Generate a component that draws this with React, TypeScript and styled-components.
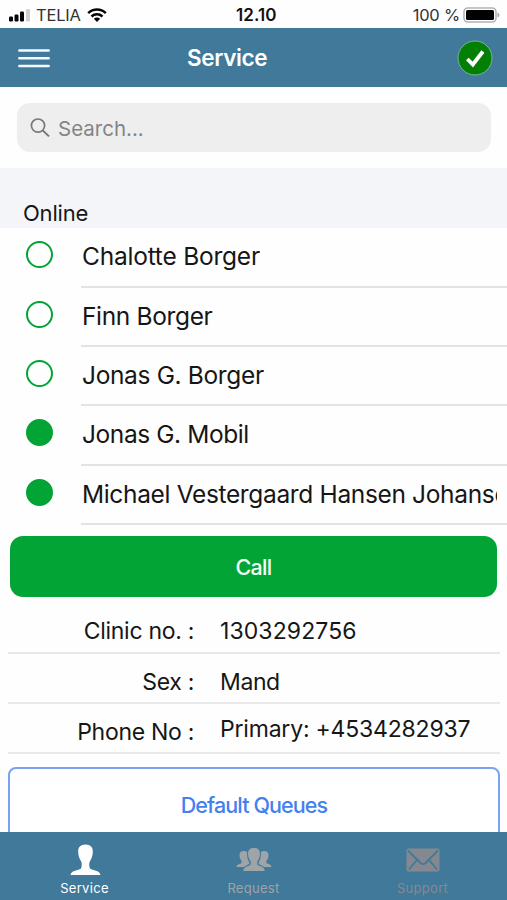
import React from 'react';
import styled, { createGlobalStyle } from 'styled-components';

const Global = createGlobalStyle`
  * { box-sizing: border-box; }
  body { margin: 0; background: #fff; }
`;

const blue = '#41799a';
const green = '#02a436';

const Screen = styled.div`
  width: 507px;
  height: 900px;
  overflow: hidden;
  display: flex;
  flex-direction: column;
  font-family: Inter, sans-serif;
  color: #161616;
  background: #fefefe;
`;

const Label = styled.span<{ $size: number; $spacing?: number; $weight?: number }>`
  display: block;
  white-space: nowrap;
  line-height: 30px;
  font-size: ${(p) => p.$size}px;
  letter-spacing: ${(p) => p.$spacing ?? 0}px;
  font-weight: ${(p) => p.$weight ?? 400};
`;

const StatusBar = styled.div`
  height: 28px;
  flex: none;
  display: grid;
  grid-template-columns: 228px auto 1fr;
  align-items: center;
  padding: 0 7px 0 8px;
  color: #333;
`;
const StatusSide = styled.div<{ $end?: boolean }>`
  display: flex;
  align-items: center;
  justify-content: ${(p) => (p.$end ? 'flex-end' : 'flex-start')};
  gap: ${(p) => (p.$end ? 3 : 6)}px;
`;
const Clock = styled(Label)` color: #111; `;

const NavBar = styled.header`
  height: 59px;
  flex: none;
  display: grid;
  grid-template-columns: 169px auto 1fr;
  align-items: center;
  padding: 0 14px 0 18px;
  background: ${blue};
  color: #fff;
`;
const NavEnd = styled.div`
  display: flex;
  justify-content: flex-end;
`;

const SearchArea = styled.div`
  height: 81px;
  flex: none;
  padding: 16px 16px 0 17px;
`;
const SearchField = styled.div`
  height: 49px;
  border-radius: 13px;
  background: #eee;
  color: #858585;
  display: flex;
  align-items: center;
  gap: 8px;
  padding: 1px 0 0 13px;
`;
const SearchText = styled(Label)` padding-top: 1px; `;

const SectionHeader = styled.div`
  height: 60px;
  flex: none;
  background: #f3f5f9;
  padding: 30px 0 0 23px;
`;

const Contact = styled.div<{ $height: number }>`
  height: ${(p) => p.$height}px;
  flex: none;
  display: flex;
  padding-left: 26px;
`;
const Presence = styled.div<{ $filled?: boolean }>`
  width: 27px;
  height: 27px;
  margin-top: 13px;
  border-radius: 50%;
  border: 2px solid ${green};
  background: ${(p) => (p.$filled ? green : 'transparent')};
`;
const ContactName = styled.div`
  flex: 1;
  min-width: 0;
  margin-left: 28px;
  padding: 13px 0 0 1px;
  border-bottom: 2px solid #e3e3e3;
`;
const Clip = styled.div`
  width: 415px;
  overflow: hidden;
`;

const CallButton = styled.button`
  height: 61px;
  flex: none;
  margin: 11px 10px 0 10px;
  border: 0;
  border-radius: 13px;
  background: ${green};
  color: #f4fff6;
  font-family: inherit;
  display: flex;
  align-items: center;
  justify-content: center;
`;

const Details = styled.div`
  margin: 6px 7px 0 8px;
  flex: none;
`;
const DetailRow = styled.div<{ $height: number }>`
  height: ${(p) => p.$height}px;
  display: grid;
  grid-template-columns: 186px 1fr;
  column-gap: 26px;
  padding-top: 13px;
  border-bottom: 2px solid #e9e9e9;
`;
const Key = styled.div`
  display: flex;
  justify-content: flex-end;
`;
const Value = styled.div<{ $raised?: boolean }>`
  margin-top: ${(p) => (p.$raised ? -3 : 0)}px;
`;

const QueueButton = styled.button`
  height: 75px;
  flex: none;
  margin: 13px 7px -10px 8px;
  border: 2px solid #79a2f0;
  border-radius: 8px;
  background: #fff;
  color: #4480f0;
  font-family: inherit;
  display: flex;
  align-items: center;
  justify-content: center;
`;

const TabBar = styled.nav`
  height: 68px;
  flex: none;
  position: relative;
  display: grid;
  grid-template-columns: repeat(3, 1fr);
  background: ${blue};
`;
const Tab = styled.div<{ $color: string }>`
  display: flex;
  flex-direction: column;
  align-items: center;
  color: ${(p) => p.$color};
  padding-top: 10px;
`;
const TabIcon = styled.div`
  height: 35px;
  display: flex;
  align-items: center;
`;
const TabLabel = styled(Label)` line-height: 22px; `;

const SignalIcon = () => (
  <svg width="22" height="14" viewBox="0 0 22 14">
    <rect x="1" y="8.5" width="4" height="5" rx="1.2" fill="#050505" />
    <rect x="6.5" y="6.5" width="4" height="7" rx="1.2" fill="#050505" />
    <rect x="12" y="3.5" width="4" height="10" rx="1.2" fill="#050505" />
    <rect x="18" y="1" width="4" height="12.5" rx="1.2" fill="#d0d0d0" />
  </svg>
);

const WifiIcon = () => (
  <svg width="20" height="14" viewBox="0 0 20 14" fill="none" stroke="#050505" strokeWidth="2.5">
    <path d="M1.2 5.1C6.2.4 13.8.4 18.8 5.1" />
    <path d="M4.5 8.5c3.2-2.9 7.8-2.9 11 0" />
    <path d="M6.8 10.7 10 14l3.2-3.3c-1.8-1.5-4.6-1.5-6.4 0Z" fill="#050505" stroke="none" />
  </svg>
);

const BatteryIcon = () => (
  <svg width="37" height="16" viewBox="0 0 37 16">
    <rect x="1" y="1" width="32" height="14" rx="4" fill="#fff" stroke="#b2b2b2" strokeWidth="1.6" />
    <rect x="3" y="3" width="28" height="10" rx="1.5" fill="#020202" />
    <path d="M34.5 5.5q2 .6 2 2.5t-2 2.5z" fill="#aaa" />
  </svg>
);

const MenuIcon = () => (
  <svg width="32" height="20" viewBox="0 0 32 20" stroke="#f2faff" strokeWidth="2.4" strokeLinecap="round">
    <path d="M1.3 2.5h29.4M1.3 10.2h29.4M1.3 18h29.4" />
  </svg>
);

const CheckIcon = () => (
  <svg width="36" height="36" viewBox="0 0 36 36">
    <circle cx="18" cy="18" r="17" fill="#038003" stroke="#78b595" strokeWidth="1" />
    <path d="m10.4 19 5.4 5.5L25.9 11.5" fill="none" stroke="#fff" strokeWidth="3.8" />
  </svg>
);

const SearchIcon = () => (
  <svg width="20" height="20" viewBox="0 0 20 20" fill="none" stroke="#777" strokeWidth="1.7">
    <circle cx="8" cy="7.6" r="6.6" />
    <path d="m12.7 12.4 6.3 6" strokeWidth="2" />
  </svg>
);

const PersonIcon = () => (
  <svg width="32" height="32" viewBox="1 0 32 32" fill="currentColor">
    <path d="M17.500 .5c5 0 7.6 2.8 7.3 7.5-.1 4-1.3 7.2-3 9.400-.8 1.500-.8 5.700.4 7.300 2.200 1.800 9.700 1.300 10.300 6.300H2.500c.6-5 8.100-4.500 10.300-6.300 1.200-1.600 1.200-5.800.4-7.300-1.700-2.200-2.900-5.400-3-9.400C9.900 3.300 12.500 .5 17.500 .5Z" />
  </svg>
);

const sideFigure =
  'M7.7 4c1.7 0 2.8.5 3.4 1.4v3.2c.2 2.5.9 4.6 2.1 6.3.2 1.1.2 1.8-.2 2.3-1.4.9-3.5 1.3-4.9 2.8H.5c.2-3.2 3.9-2.7 4.9-4 .4-.7.3-1.900-.1-2.700C4.200 12 3.500 10.500 3.500 8.400 3.300 5.500 5 4 7.700 4Z';

const GroupIcon = () => (
  <svg width="36" height="25" viewBox="0 0 36 25" fill="currentColor">
    <path d="M18 1c4.3 0 6.2 2.3 5.9 6.2-.1 3-1 5-2.4 6.8-.5 1.2-.4 3.2.3 4.1 1.8 1.5 6.5 1.1 6.900 5.900H7.300c.4-4.800 5.100-4.400 6.900-5.900.7-.9.8-2.900.3-4.100-1.400-1.800-2.300-3.800-2.400-6.800C11.800 3.300 13.700 1 18 1Z" />
    <path d={sideFigure} />
    <path transform="matrix(-1 0 0 1 36 0)" d={sideFigure} />
  </svg>
);

const MailIcon = () => (
  <svg width="34" height="24" viewBox="0 0 34 24">
    <rect x=".5" y=".5" width="33" height="23" rx="2" fill="currentColor" />
    <path d="M2 2.5 14.5 15q2.5 2.3 5 0L32 2.5M3 21.5l7.7-9.3M31 21.5l-7.7-9.3" fill="none" stroke={blue} strokeWidth="1.8" />
  </svg>
);

const contacts = [
  { name: 'Chalotte Borger', height: 60, spacing: -0.22 },
  { name: 'Finn Borger', height: 59, spacing: -0.35 },
  { name: 'Jonas G. Borger', height: 59, spacing: -0.35 },
  { name: 'Jonas G. Mobil', height: 60, spacing: -0.42, filled: true },
  { name: 'Michael Vestergaard Hansen Johansen', height: 59, spacing: -0.345, filled: true },
];

const details = [
  { label: 'Clinic no. :', value: '1303292756', height: 51, spacing: 0.1 },
  { label: 'Sex :', value: 'Mand', height: 50, spacing: -0.4 },
  { label: 'Phone No :', value: 'Primary: +4534282937', height: 50, spacing: -0.2, raised: true },
];

export default function App() {
  return (
    <Screen>
      <Global />
      <StatusBar>
        <StatusSide>
          <SignalIcon />
          <Label $size={16.5} $spacing={-0.2}>TELIA</Label>
          <WifiIcon />
        </StatusSide>
        <Clock $size={17} $weight={600} $spacing={0.1}>12.10</Clock>
        <StatusSide $end>
          <Label $size={16.5} $spacing={-0.2}>100 %</Label>
          <BatteryIcon />
        </StatusSide>
      </StatusBar>
      <NavBar>
        <MenuIcon />
        <Label $size={22.5} $weight={600} $spacing={-0.35}>Service</Label>
        <NavEnd><CheckIcon /></NavEnd>
      </NavBar>
      <SearchArea>
        <SearchField>
          <SearchIcon />
          <SearchText $size={20.5}>Search...</SearchText>
        </SearchField>
      </SearchArea>
      <SectionHeader>
        <Label $size={22} $spacing={-0.2}>Online</Label>
      </SectionHeader>
      {contacts.map((c) => (
        <Contact key={c.name} $height={c.height}>
          <Presence $filled={c.filled} />
          <ContactName>
            <Clip><Label $size={24.5} $spacing={c.spacing}>{c.name}</Label></Clip>
          </ContactName>
        </Contact>
      ))}
      <CallButton><Label $size={21.5} $weight={500} $spacing={-0.7}>Call</Label></CallButton>
      <Details>
        {details.map((d) => (
          <DetailRow key={d.label} $height={d.height}>
            <Key><Label $size={23} $spacing={-0.3}>{d.label}</Label></Key>
            <Value $raised={d.raised}><Label $size={23} $spacing={d.spacing}>{d.value}</Label></Value>
          </DetailRow>
        ))}
      </Details>
      <QueueButton><Label $size={21.5} $weight={500} $spacing={-0.9}>Default Queues</Label></QueueButton>
      <TabBar>
        <Tab $color="#fff"><TabIcon><PersonIcon /></TabIcon><TabLabel $size={13} $spacing={0.3}>Service</TabLabel></Tab>
        <Tab $color="#9ea4a7"><TabIcon><GroupIcon /></TabIcon><TabLabel $size={13} $spacing={0.3}>Request</TabLabel></Tab>
        <Tab $color="#85898f"><TabIcon><MailIcon /></TabIcon><TabLabel $size={13} $spacing={0.3}>Support</TabLabel></Tab>
      </TabBar>
    </Screen>
  );
}
